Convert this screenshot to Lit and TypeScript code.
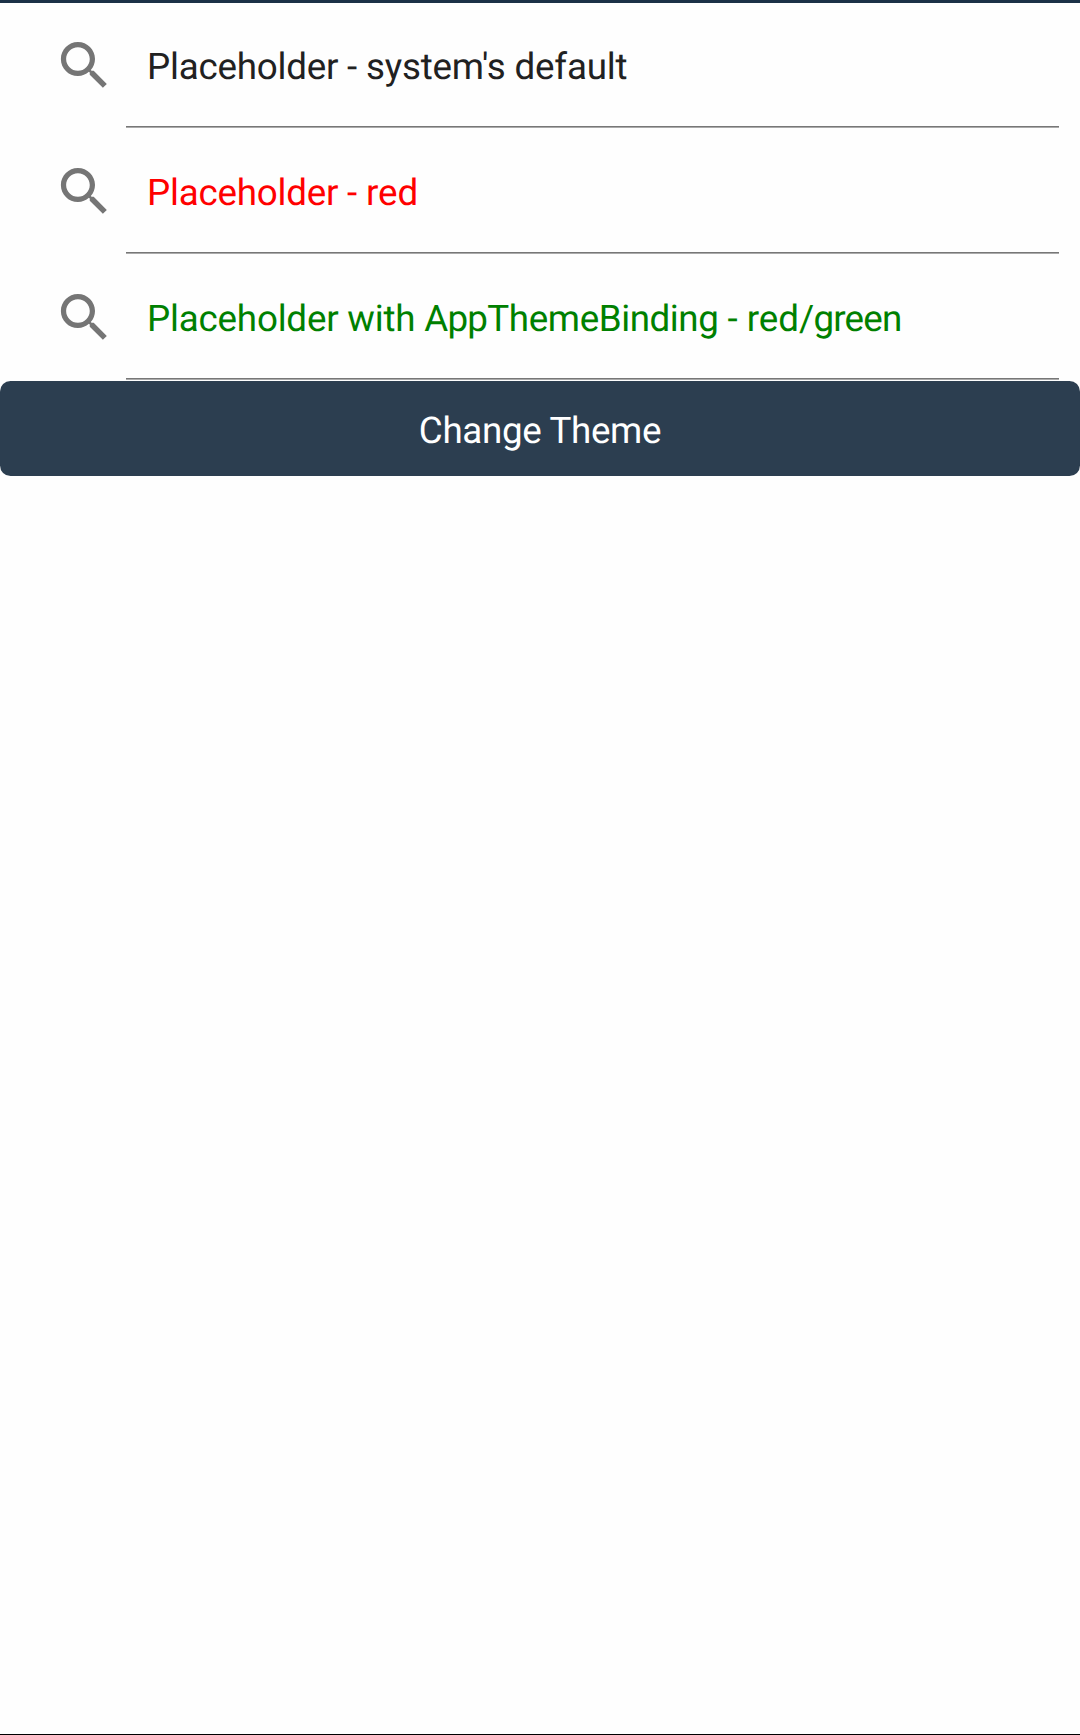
import { LitElement, html, css } from "lit";
import { customElement } from "lit/decorators.js";

/** A run of text and its letter spacing in pixels. */
type Run = [string, number];

@customElement("search-field")
class SearchField extends LitElement {
  static properties = { runs: { attribute: false } };
  declare runs: Run[];

  static styles = css`
    :host {
      display: flex;
      box-sizing: border-box;
      height: 126px;
      padding-left: 53px;
      padding-right: 21px;
    }
    .icon {
      flex: none;
      width: 63px;
      height: 63px;
      margin-top: 31px;
      margin-right: 10px;
      fill: #757575;
    }
    .plate {
      flex: 1;
      display: flex;
      flex-direction: column;
      padding-bottom: 1px;
    }
    .text {
      flex: 1;
      padding: 42px 0 0 21px;
      line-height: 43px;
      white-space: pre;
    }
    .line {
      height: 1px;
      background: #777;
      border-bottom: 1px solid #aaa;
    }
  `;

  render() {
    return html`
      <svg class="icon" viewBox="0 0 24 24">
        <path
          d="M15.5,14l-0.8,0l-0.3,-0.3c1,-1.1 1.6,-2.6 1.6,-4.2C16,5.9 13.1,3 9.5,3C5.9,3 3,5.9 3,9.5S5.9,16 9.5,16c1.6,0 3.1,-0.6 4.2,-1.6l0.3,0.3l0,0.8l5,5l1.5,-1.5L15.5,14zM9.5,14C7,14 5,12 5,9.5S7,5 9.5,5C12,5 14,7 14,9.5S12,14 9.5,14z"
        />
      </svg>
      <div class="plate">
        <div class="text">${this.runs.map(([text, gap]) => html`<span style="letter-spacing:${gap}px">${text}</span>`)}</div>
        <div class="line"></div>
      </div>
    `;
  }
}

const fields: { tone: string; runs: Run[] }[] = [
  { tone: "default", runs: [["Placeholder - ", -0.22], ["system's default", -0.19]] },
  { tone: "red", runs: [["Placeholder - ", -0.22], ["red", 0]] },
  {
    tone: "green",
    runs: [
      ["Placeholder with ", -0.2],
      ["App", -0.8],
      ["Theme", -0.35],
      ["Binding", -0.45],
      [" - red", 0],
      ["/green", -0.8],
    ],
  },
];

@customElement("app-root")
class AppRoot extends LitElement {
  static styles = css`
    :host {
      display: flex;
      flex-direction: column;
      box-sizing: border-box;
      height: 1735px;
      border-top: 3px solid #1b3147;
      border-bottom: 1px solid #000;
      background: #fefefe;
      font-family: Roboto, sans-serif;
      font-size: 36.75px;
      text-rendering: geometricPrecision;
    }
    .default {
      color: #212121;
    }
    .red {
      color: #ff0000;
    }
    .green {
      color: #008000;
    }
    .button {
      height: 95px;
      border: 0;
      border-radius: 10.5px;
      padding: 4px 0 0;
      background: #2c3e50;
      color: #fff;
      font: inherit;
      line-height: 43px;
      letter-spacing: -0.33px;
      text-rendering: inherit;
    }
  `;

  render() {
    return html`
      ${fields.map((f) => html`<search-field class=${f.tone} .runs=${f.runs}></search-field>`)}
      <button class="button">Change Theme</button>
    `;
  }
}
